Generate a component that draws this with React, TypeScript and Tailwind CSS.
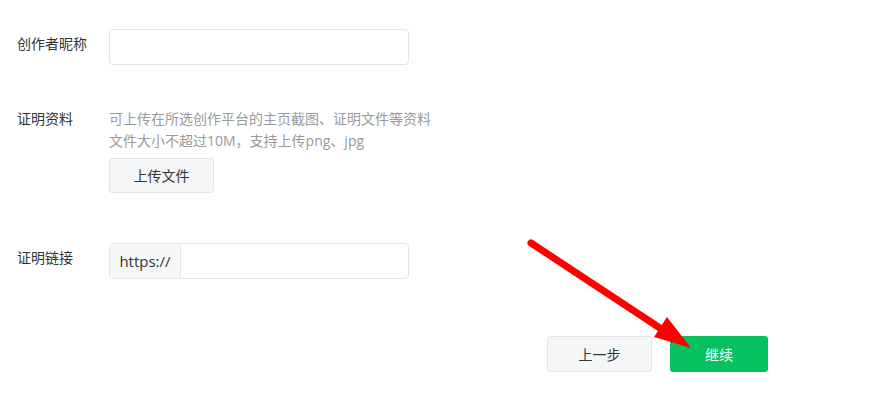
export default function App() {
  return (
    <div className="relative h-[403px] w-[894px] bg-white text-[14px] text-[#333] font-['Open_Sans','Noto_Sans_CJK_SC',sans-serif]">
      <div className="flex flex-col pl-[17px] pt-[29px]">
        {/* nickname */}
        <div className="flex">
          <div className="w-[92px] pt-[4px] leading-[22px]">创作者昵称</div>
          <input className="h-[36px] w-[300px] rounded-[4px] border border-[#e4e5e7] px-3 outline-none" />
        </div>

        {/* proof files */}
        <div className="mt-[43px] flex">
          <div className="w-[92px] leading-[22px]">证明资料</div>
          <div className="flex flex-col">
            <p className="leading-[22px] text-[#9a9a9a]">可上传在所选创作平台的主页截图、证明文件等资料</p>
            <p className="leading-[22px] text-[#9a9a9a]">文件大小不超过10M，支持上传png、jpg</p>
            <button className="mt-[6px] h-[35px] w-[105px] rounded-[3px] border border-[#e3e4e6] bg-[#f5f6f7] text-[#333]">
              上传文件
            </button>
          </div>
        </div>

        {/* proof link */}
        <div className="mt-[50px] flex">
          <div className="w-[92px] pt-[4px] leading-[22px]">证明链接</div>
          <div className="flex h-[36px] w-[300px] overflow-hidden rounded-[4px] border border-[#e4e5e7]">
            <span className="flex w-[71px] items-center justify-center border-r border-[#e4e5e7] bg-[#f6f7f8] text-[15px] text-[#333]">
              https://
            </span>
            <input className="flex-1 px-3 outline-none" />
          </div>
        </div>
      </div>

      {/* actions */}
      <div className="mt-[57px] flex justify-end gap-[18px] pr-[126px]">
        <button className="h-[36px] w-[105px] rounded-[3px] border border-[#e3e4e6] bg-[#f5f6f7] text-[#333]">上一步</button>
        <button className="h-[36px] w-[98px] rounded-[3px] bg-[#07c160] text-white">继续</button>
      </div>

      {/* annotation arrow */}
      <svg className="pointer-events-none absolute left-0 top-0" width="894" height="403">
        <line x1="531" y1="243" x2="666" y2="332" stroke="#ff0000" strokeWidth="7" strokeLinecap="round" />
        <polygon points="654,337 667,317 691,348" fill="#ff0000" />
      </svg>
    </div>
  )
}
